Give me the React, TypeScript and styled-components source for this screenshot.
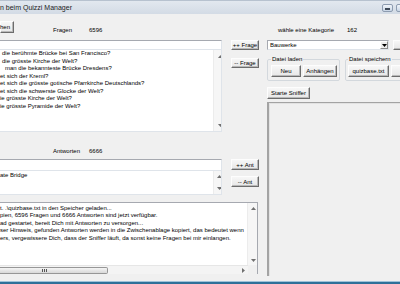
import React from 'react'
import styled, { createGlobalStyle } from 'styled-components'

const GlobalStyle = createGlobalStyle`
  html, body {
    margin: 0;
    padding: 0;
  }
  body {
    width: 400px;
    height: 284px;
    overflow: hidden;
    background: #f0f0f0;
    font-family: "Liberation Sans", Arial, sans-serif;
    font-size: 6px;
    color: #000;
  }
`

const Screen = styled.div`
  width: 400px;
  height: 284px;
  display: flex;
  flex-direction: column;
  overflow: hidden;
`

const TitleBar = styled.div`
  height: 14px;
  flex: none;
  display: flex;
  align-items: center;
  box-sizing: border-box;
  border-top: 1px solid #b7c2cf;
  background: linear-gradient(#e2e8ef, #d3dbe5);
`

const TitleText = styled.span`
  flex: 1;
  font-size: 7px;
  white-space: nowrap;
  color: #1c1c1c;
`

const CaptionButtons = styled.div`
  display: flex;
  gap: 3px;
  align-self: flex-start;
  margin-top: 3px;
  margin-right: -7px;
`

const CaptionButton = styled.div`
  width: 11px;
  height: 8px;
  box-sizing: border-box;
  border: 1px solid #8d9cb0;
  border-radius: 2px;
  background: linear-gradient(#f1f5fa, #c8d5e5);
  display: flex;
  align-items: flex-end;
  justify-content: center;
`

const MinBar = styled.div`
  width: 5px;
  height: 2px;
  box-sizing: border-box;
  border: 1px solid #3f4a58;
  background: #fff;
  margin-bottom: 1px;
`

const Body = styled.div`
  flex: 1;
  display: flex;
  overflow: hidden;
`

const LeftColumn = styled.div`
  width: 222px;
  flex: none;
  display: flex;
  flex-direction: column;
`

const MidColumn = styled.div`
  width: 28px;
  flex: none;
  margin-left: 9px;
  padding-top: 26px;
  display: flex;
  flex-direction: column;
`

const RightColumn = styled.div`
  flex: 1;
  min-width: 0;
  margin-left: 8px;
  margin-bottom: 5px;
  display: flex;
  flex-direction: column;
`

const BottomStrip = styled.div`
  height: 3px;
  flex: none;
  box-sizing: border-box;
  border-top: 1px solid #9fc2d9;
  background: #2f7099;
`

const WinButton = styled.button<{ $w: number; $h?: number; $gap?: number }>`
  width: ${p => p.$w}px;
  height: ${p => p.$h ?? 12}px;
  margin-top: ${p => p.$gap ?? 0}px;
  flex: none;
  padding: 0;
  box-sizing: border-box;
  font-family: "Liberation Sans", Arial, sans-serif;
  font-size: 6px;
  line-height: 1;
  color: #000;
  background: linear-gradient(#f7f7f7, #e7e7e7);
  border: 1px solid;
  border-color: #fdfdfd #6c6c6c #6c6c6c #fdfdfd;
  box-shadow: inset -1px -1px #b9b9b9;
  display: flex;
  align-items: center;
  justify-content: center;
  white-space: nowrap;
`

const StubButton = styled(WinButton)`
  justify-content: flex-end;
  padding-right: 3px;
`

const HeaderRow = styled.div<{ $top: number }>`
  height: 26px;
  flex: none;
  box-sizing: border-box;
  padding-top: ${p => p.$top}px;
  display: flex;
  align-items: flex-start;
`

const Caption = styled.span<{ $left?: number; $w?: number; $top?: number }>`
  margin-left: ${p => p.$left ?? 0}px;
  margin-top: ${p => p.$top ?? 0}px;
  width: ${p => (p.$w ? `${p.$w}px` : 'auto')};
  flex: none;
  line-height: 8px;
  white-space: nowrap;
`

const SectionGap = styled.div<{ $h: number }>`
  height: ${p => p.$h}px;
  flex: none;
  display: flex;
  align-items: flex-start;
`

const TextBox = styled.div<{ $h: number }>`
  height: ${p => p.$h}px;
  flex: none;
  box-sizing: border-box;
  background: #fff;
  border: 1px solid;
  border-left: none;
  border-color: #a6a9b0 #dfe4ea #dfe4ea #a6a9b0;
`

const ListBox = styled.div<{ $h: number }>`
  height: ${p => p.$h}px;
  flex: none;
  box-sizing: border-box;
  background: #fff;
  border-right: 1px solid #dfe4ea;
  border-bottom: 1px solid #dfe4ea;
  display: flex;
  overflow: hidden;
`

const ListLines = styled.div<{ $top: number }>`
  flex: 1;
  min-width: 0;
  padding-top: ${p => p.$top}px;
  line-height: 7.5px;
  white-space: nowrap;
  overflow: hidden;
`

const ListLine = styled.div<{ $indent?: number }>`
  padding-left: ${p => p.$indent ?? 0}px;
`

const VScroll = styled.div<{ $w: number }>`
  width: ${p => p.$w}px;
  flex: none;
  display: flex;
  flex-direction: column;
  justify-content: space-between;
  background: #f6f6f6;
  border-left: 1px solid #ececec;
`

const ArrowCell = styled.div<{ $size: number }>`
  height: ${p => p.$size}px;
  width: ${p => p.$size}px;
  flex: none;
  display: flex;
  align-items: center;
  justify-content: center;
`

const LogBox = styled.div`
  height: 72px;
  width: 258px;
  flex: none;
  box-sizing: border-box;
  background: #fff;
  border-top: 1px solid #a6a9b0;
  border-right: 1px solid #a6a9b0;
  display: flex;
  flex-direction: column;
  overflow: hidden;
`

const LogMain = styled.div`
  flex: 1;
  min-height: 0;
  display: flex;
`

const LogFooter = styled.div`
  height: 9px;
  flex: none;
  display: flex;
`

const HScroll = styled.div`
  flex: 1;
  display: flex;
  align-items: center;
  background: #f4f4f4;
  border-top: 1px solid #e6e6e6;
`

const HThumb = styled.div`
  width: 108px;
  height: 7px;
  box-sizing: border-box;
  border: 1px solid #979797;
  border-left: none;
  border-radius: 0 2px 2px 0;
  background: linear-gradient(#f4f4f4, #d9d9d9);
  display: flex;
  align-items: center;
  padding-left: 42px;
  gap: 1px;
`

const Grip = styled.div`
  width: 1px;
  height: 3px;
  background: #555;
`

const RightArrowCell = styled(ArrowCell)`
  margin-left: auto;
`

const Corner = styled.div`
  width: 9px;
  flex: none;
  background: #f0f0f0;
`

const ComboRow = styled.div`
  height: 10px;
  flex: none;
  display: flex;
`

const Combo = styled.div`
  width: 122px;
  height: 10px;
  flex: none;
  box-sizing: border-box;
  background: #fff;
  border: 1px solid;
  border-color: #a6a9b0 #dfe4ea #dfe4ea #a6a9b0;
  display: flex;
  align-items: center;
  padding-left: 2px;
`

const ComboText = styled.span`
  flex: 1;
  line-height: 8px;
`

const DropButton = styled.div`
  width: 8px;
  height: 8px;
  flex: none;
  box-sizing: border-box;
  border: 1px solid;
  border-color: #fff #8a8a8a #8a8a8a #fff;
  background: #ececec;
  display: flex;
  align-items: center;
  justify-content: center;
`

const GroupRow = styled.div`
  margin-top: 6px;
  display: flex;
  gap: 5px;
  align-items: flex-start;
  flex: none;
`

const GroupBox = styled.fieldset<{ $pl: number }>`
  margin: 0;
  padding: 3px 2px 3px ${p => p.$pl}px;
  min-width: 0;
  flex: none;
  box-sizing: border-box;
  border: 1px solid #d3d8dd;
  border-radius: 2px;
  display: flex;
  gap: 2px;
`

const GroupLegend = styled.legend`
  padding: 0 1px;
  margin: 0;
  font-size: 6px;
  line-height: 6px;
`

const SnifferPanel = styled.div`
  flex: 1;
  margin-top: 3px;
  box-sizing: border-box;
  background: #f0f0f0;
  border-top: 1px solid #a3a3a3;
  border-left: 2px solid #a3a3a3;
  box-shadow: inset 1px 1px #e2e2e2;
`

const Arrow = ({ dir }: { dir: 'up' | 'down' | 'right' }) => {
  const pts =
    dir === 'up' ? '0,3 2.5,0 5,3' : dir === 'down' ? '0,0 2.5,3 5,0' : '0,0 3,2.5 0,5'
  const w = dir === 'right' ? 3 : 5
  const h = dir === 'right' ? 5 : 3
  return (
    <svg width={w} height={h} viewBox={`0 0 ${w} ${h}`}>
      <polygon points={pts} fill="#707070" />
    </svg>
  )
}

const questions: [string, number][] = [
  ['die berühmte Brücke bei San Francisco?', 2],
  ['die grösste Kirche der Welt?', 2],
  ['man die bekannteste Brücke Dresdens?', 5],
  ['et sich der Kreml?', 0],
  ['et sich die grösste gotische Pfarrkirche Deutschlands?', 0],
  ['et sich die schwerste Glocke der Welt?', 0],
  ['ie grösste Kirche der Welt?', 0],
  ['ie grösste Pyramide der Welt?', 0]
]

const logLines = [
  't. .\\quizbase.txt in den Speicher geladen...',
  'pien, 6596 Fragen und 6666 Antworten sind jetzt verfügbar.',
  'ad gestartet, bereit Dich mit Antworten zu versorgen...',
  'ser Hinweis, gefunden Antworten werden in die Zwischenablage kopiert, das bedeutet wenn',
  'ers, vergewissere Dich, dass der Sniffer läuft, da sonst keine Fragen bei mir einlangen.'
]

export default function App() {
  return (
    <Screen>
      <GlobalStyle />
      <TitleBar>
        <TitleText>n beim Quizzi Manager</TitleText>
        <CaptionButtons>
          <CaptionButton>
            <MinBar />
          </CaptionButton>
          <CaptionButton />
        </CaptionButtons>
      </TitleBar>

      <Body>
        <LeftColumn>
          <HeaderRow $top={7}>
            <StubButton $w={14}>hen</StubButton>
            <Caption $left={39} $w={36} $top={5}>
              Fragen
            </Caption>
            <Caption $top={5}>6596</Caption>
          </HeaderRow>
          <TextBox $h={10} />
          <ListBox $h={82}>
            <ListLines $top={0}>
              {questions.map(([text, indent], i) => (
                <ListLine key={i} $indent={indent}>
                  {text}
                </ListLine>
              ))}
            </ListLines>
            <VScroll $w={7}>
              <ArrowCell $size={12}>
                <Arrow dir="up" />
              </ArrowCell>
              <ArrowCell $size={12}>
                <Arrow dir="down" />
              </ArrowCell>
            </VScroll>
          </ListBox>

          <SectionGap $h={27}>
            <Caption $left={53} $w={36} $top={15}>
              Antworten
            </Caption>
            <Caption $top={15}>6666</Caption>
          </SectionGap>
          <TextBox $h={12} />
          <ListBox $h={24}>
            <ListLines $top={1}>
              <ListLine>ate Bridge</ListLine>
            </ListLines>
            <VScroll $w={7}>
              <ArrowCell $size={11}>
                <Arrow dir="up" />
              </ArrowCell>
              <ArrowCell $size={11}>
                <Arrow dir="down" />
              </ArrowCell>
            </VScroll>
          </ListBox>
          <SectionGap $h={7} />

          <LogBox>
            <LogMain>
              <ListLines $top={1.5}>
                {logLines.map((line, i) => (
                  <ListLine key={i}>{line}</ListLine>
                ))}
              </ListLines>
              <VScroll $w={9}>
                <ArrowCell $size={10}>
                  <Arrow dir="up" />
                </ArrowCell>
                <ArrowCell $size={10}>
                  <Arrow dir="down" />
                </ArrowCell>
              </VScroll>
            </LogMain>
            <LogFooter>
              <HScroll>
                <HThumb>
                  <Grip />
                  <Grip />
                  <Grip />
                </HThumb>
                <RightArrowCell $size={9}>
                  <Arrow dir="right" />
                </RightArrowCell>
              </HScroll>
              <Corner />
            </LogFooter>
          </LogBox>
        </LeftColumn>

        <MidColumn>
          <WinButton $w={28} $h={10}>
            ++ Frage
          </WinButton>
          <WinButton $w={28} $h={10} $gap={8}>
            -- Frage
          </WinButton>
          <WinButton $w={28} $h={11} $gap={91}>
            ++ Ant
          </WinButton>
          <WinButton $w={28} $h={11} $gap={6}>
            -- Ant
          </WinButton>
        </MidColumn>

        <RightColumn>
          <HeaderRow $top={12}>
            <Caption $left={11} $w={69}>
              wähle eine Kategorie
            </Caption>
            <Caption>162</Caption>
          </HeaderRow>
          <ComboRow>
            <Combo>
              <ComboText>Bauwerke</ComboText>
              <DropButton>
                <svg width="5" height="3" viewBox="0 0 5 3">
                  <polygon points="0,0 2.5,3 5,0" fill="#000" />
                </svg>
              </DropButton>
            </Combo>
            <WinButton $w={20} $h={10} style={{ marginLeft: 4 }} />
          </ComboRow>
          <GroupRow>
            <GroupBox $pl={3}>
              <GroupLegend>Datei laden</GroupLegend>
              <WinButton $w={30}>Neu</WinButton>
              <WinButton $w={34}>Anhängen</WinButton>
            </GroupBox>
            <GroupBox $pl={2}>
              <GroupLegend>Datei speichern</GroupLegend>
              <WinButton $w={41}>quizbase.txt</WinButton>
              <WinButton $w={30} />
            </GroupBox>
          </GroupRow>
          <WinButton $w={43} $gap={6}>
            Starte Sniffer
          </WinButton>
          <SnifferPanel />
        </RightColumn>
      </Body>
      <BottomStrip />
    </Screen>
  )
}
